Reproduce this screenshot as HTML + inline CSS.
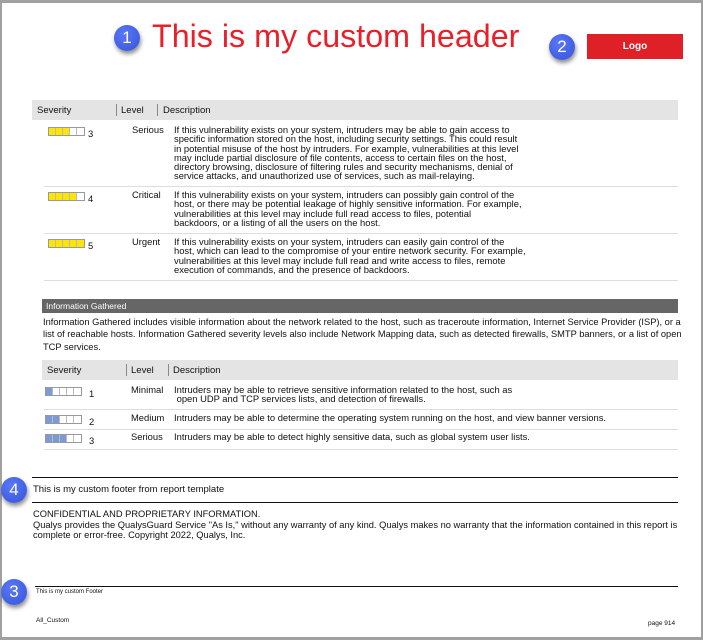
<!DOCTYPE html>
<html><head><meta charset="utf-8"><style>
*{margin:0;padding:0;box-sizing:border-box}
html,body{width:703px;height:640px;overflow:hidden;background:#fff}
body{position:relative;font-family:"Liberation Sans",Arial,sans-serif;color:#111;border:2px solid #a0a0a0;border-top-width:3px;border-bottom-width:3px}
.a{position:absolute;white-space:nowrap}
.c{position:absolute;width:26px;height:26px;border-radius:50%;background:radial-gradient(circle at 40% 35%,#5a78f5,#3552dc);color:#fff;font-size:17px;text-align:center;line-height:26px;box-shadow:1px 3px 4px rgba(0,0,0,.45)}
.hd{position:absolute;background:#e4e4e4;height:20px;font-size:9.5px}
.sep{position:absolute;top:4px;width:1px;height:12px;background:#888}
.t{position:absolute;font-size:9.4px;line-height:9.3px;white-space:nowrap}
.bar{position:absolute;height:9px;display:flex;border:1px solid #999;}
.bar i{display:block;width:7px;height:7px;border-right:1px solid #bbb;background:#fff}
.bar i:last-child{border-right:none}
.y i.f{background:#ffe600}
.b i.f{background:#7c9bd6}
.hr{position:absolute;height:1px;background:#ddd}
.bl{position:absolute;height:1px;background:#111}
</style></head><body>
<div class="c" style="left:112px;top:22px">1</div>
<div class="a" style="left:150px;top:16px;font-size:30px;color:#e8202a;transform-origin:0 0;transform:scale(1.075,1.08)">This is my custom header</div>
<div class="c" style="left:547px;top:31px">2</div>
<div class="a" style="left:585px;top:31px;width:96px;height:25px;background:#e02027;color:#fff;font-size:10px;font-weight:bold;text-align:center;line-height:25px">Logo</div>

<div class="hd" style="left:30px;top:97px;width:646px">
<span class="a" style="left:5px;top:5px">Severity</span><div class="sep" style="left:84px"></div>
<span class="a" style="left:89px;top:5px">Level</span><div class="sep" style="left:125px"></div>
<span class="a" style="left:131px;top:5px">Description</span></div>

<div class="bar y" style="left:46px;top:124px"><i class="f"></i><i class="f"></i><i class="f"></i><i></i><i></i></div>
<div class="t" style="left:86px;top:126px">3</div>
<div class="t" style="left:130px;top:122px">Serious</div>
<div class="t" style="left:172px;top:122px">If this vulnerability exists on your system, intruders may be able to gain access to<br>specific information stored on the host, including security settings. This could result<br>in potential misuse of the host by intruders. For example, vulnerabilities at this level<br>may include partial disclosure of file contents, access to certain files on the host,<br>directory browsing, disclosure of filtering rules and security mechanisms, denial of<br>service attacks, and unauthorized use of services, such as mail-relaying.</div>
<div class="hr" style="left:42px;top:183px;width:634px"></div>

<div class="bar y" style="left:46px;top:189px"><i class="f"></i><i class="f"></i><i class="f"></i><i class="f"></i><i></i></div>
<div class="t" style="left:86px;top:191px">4</div>
<div class="t" style="left:130px;top:187px">Critical</div>
<div class="t" style="left:172px;top:187px">If this vulnerability exists on your system, intruders can possibly gain control of the<br>host, or there may be potential leakage of highly sensitive information. For example,<br>vulnerabilities at this level may include full read access to files, potential<br>backdoors, or a listing of all the users on the host.</div>
<div class="hr" style="left:42px;top:230px;width:634px"></div>

<div class="bar y" style="left:46px;top:236px"><i class="f"></i><i class="f"></i><i class="f"></i><i class="f"></i><i class="f"></i></div>
<div class="t" style="left:86px;top:238px">5</div>
<div class="t" style="left:130px;top:234px">Urgent</div>
<div class="t" style="left:172px;top:234px">If this vulnerability exists on your system, intruders can easily gain control of the<br>host, which can lead to the compromise of your entire network security. For example,<br>vulnerabilities at this level may include full read and write access to files, remote<br>execution of commands, and the presence of backdoors.</div>
<div class="hr" style="left:42px;top:277px;width:634px"></div>

<div class="a" style="left:40px;top:296px;width:636px;height:14px;background:#666;color:#fff;font-size:8.5px;line-height:14px;padding-left:4px">Information Gathered</div>
<div class="a" style="left:41px;top:313px;font-size:9.3px;line-height:12.3px;white-space:normal;width:640px">Information Gathered includes visible information about the network related to the host, such as traceroute information, Internet Service Provider (ISP), or a list of reachable hosts. Information Gathered severity levels also include Network Mapping data, such as detected firewalls, SMTP banners, or a list of open TCP services.</div>

<div class="hd" style="left:40px;top:357px;width:636px">
<span class="a" style="left:5px;top:5px">Severity</span><div class="sep" style="left:84px"></div>
<span class="a" style="left:89px;top:5px">Level</span><div class="sep" style="left:126px"></div>
<span class="a" style="left:131px;top:5px">Description</span></div>

<div class="bar b" style="left:43px;top:384px"><i class="f"></i><i></i><i></i><i></i><i></i></div>
<div class="t" style="left:87px;top:386px">1</div>
<div class="t" style="left:129px;top:382px">Minimal</div>
<div class="t" style="left:172px;top:382px">Intruders may be able to retrieve sensitive information related to the host, such as<br>&nbsp;open UDP and TCP services lists, and detection of firewalls.</div>
<div class="hr" style="left:42px;top:406px;width:634px"></div>
<div class="bar b" style="left:43px;top:412px"><i class="f"></i><i class="f"></i><i></i><i></i><i></i></div>
<div class="t" style="left:87px;top:414px">2</div>
<div class="t" style="left:129px;top:410px">Medium</div>
<div class="t" style="left:172px;top:410px">Intruders may be able to determine the operating system running on the host, and view banner versions.</div>
<div class="hr" style="left:42px;top:426px;width:634px"></div>
<div class="bar b" style="left:43px;top:431px"><i class="f"></i><i class="f"></i><i class="f"></i><i></i><i></i></div>
<div class="t" style="left:87px;top:433px">3</div>
<div class="t" style="left:129px;top:429px">Serious</div>
<div class="t" style="left:172px;top:429px">Intruders may be able to detect highly sensitive data, such as global system user lists.</div>
<div class="hr" style="left:42px;top:446px;width:634px"></div>

<div class="bl" style="left:30px;top:474px;width:646px"></div>
<div class="c" style="left:-1px;top:474px">4</div>
<div class="a" style="left:31px;top:481px;font-size:9.5px">This is my custom footer from report template</div>
<div class="bl" style="left:30px;top:499px;width:646px"></div>
<div class="a" style="left:31px;top:506px;font-size:9.3px;line-height:10.5px">CONFIDENTIAL AND PROPRIETARY INFORMATION.<br>Qualys provides the QualysGuard Service "As Is," without any warranty of any kind. Qualys makes no warranty that the information contained in this report is<br>complete or error-free. Copyright 2022, Qualys, Inc.</div>

<div class="bl" style="left:33px;top:583px;width:643px"></div>
<div class="c" style="left:-1px;top:576px">3</div>
<div class="a" style="left:34px;top:586px;font-size:6px">This is my custom Footer</div>
<div class="a" style="left:34px;top:614px;font-size:6.5px">All_Custom</div>
<div class="a" style="left:646px;top:617px;font-size:6.5px">page 914</div>
</body></html>
